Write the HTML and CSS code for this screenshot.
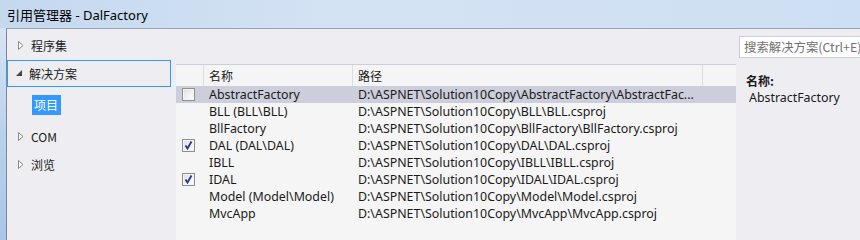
FILE: index.html
```html
<!DOCTYPE html>
<html>
<head>
<meta charset="utf-8">
<link rel="stylesheet" href="styles.css">
</head>
<body>
<div class="window">
  <div class="titlebar">引用管理器 - DalFactory</div>
  <div class="frame">
    <div class="content">
      <div class="nav">
        <div class="nav-item">
          <svg class="tri" width="6" height="9" viewBox="0 0 6 9"><path d="M0.5 0.5 L5 4.5 L0.5 8.5 Z" fill="#fff" stroke="#8a8a8a" stroke-width="1"/></svg>
          <span>程序集</span>
        </div>
        <div class="nav-item selected">
          <svg class="tri-open" width="7" height="7" viewBox="0 0 7 7"><path d="M6 0 L6 6 L0 6 Z" fill="#444"/></svg>
          <span>解决方案</span>
        </div>
        <div class="nav-sub"><span class="sub-sel">项目</span></div>
        <div class="nav-item">
          <svg class="tri" width="6" height="9" viewBox="0 0 6 9"><path d="M0.5 0.5 L5 4.5 L0.5 8.5 Z" fill="#fff" stroke="#8a8a8a" stroke-width="1"/></svg>
          <span>COM</span>
        </div>
        <div class="nav-item">
          <svg class="tri" width="6" height="9" viewBox="0 0 6 9"><path d="M0.5 0.5 L5 4.5 L0.5 8.5 Z" fill="#fff" stroke="#8a8a8a" stroke-width="1"/></svg>
          <span>浏览</span>
        </div>
      </div>
      <div class="list">
        <div class="list-top"></div>
        <div class="table">
          <div class="row header">
            <div class="c-chk"></div>
            <div class="c-name">名称</div>
            <div class="c-path">路径</div>
            <div class="c-extra"></div>
          </div>
          <div class="row sel">
            <div class="c-chk"><span class="chk"></span></div>
            <div class="c-name">AbstractFactory</div>
            <div class="c-path">D:\ASPNET\Solution10Copy\AbstractFactory\AbstractFac...</div>
            <div class="c-extra"></div>
          </div>
          <div class="row">
            <div class="c-chk"></div>
            <div class="c-name">BLL (BLL\BLL)</div>
            <div class="c-path">D:\ASPNET\Solution10Copy\BLL\BLL.csproj</div>
            <div class="c-extra"></div>
          </div>
          <div class="row">
            <div class="c-chk"></div>
            <div class="c-name">BllFactory</div>
            <div class="c-path">D:\ASPNET\Solution10Copy\BllFactory\BllFactory.csproj</div>
            <div class="c-extra"></div>
          </div>
          <div class="row">
            <div class="c-chk"><span class="chk"><svg width="11" height="11" viewBox="0 0 11 11"><path d="M2.5 5.5 L4.5 8.5 L8.5 1.5" fill="none" stroke="#26349a" stroke-width="1.8"/></svg></span></div>
            <div class="c-name">DAL (DAL\DAL)</div>
            <div class="c-path">D:\ASPNET\Solution10Copy\DAL\DAL.csproj</div>
            <div class="c-extra"></div>
          </div>
          <div class="row">
            <div class="c-chk"></div>
            <div class="c-name">IBLL</div>
            <div class="c-path">D:\ASPNET\Solution10Copy\IBLL\IBLL.csproj</div>
            <div class="c-extra"></div>
          </div>
          <div class="row">
            <div class="c-chk"><span class="chk"><svg width="11" height="11" viewBox="0 0 11 11"><path d="M2.5 5.5 L4.5 8.5 L8.5 1.5" fill="none" stroke="#26349a" stroke-width="1.8"/></svg></span></div>
            <div class="c-name">IDAL</div>
            <div class="c-path">D:\ASPNET\Solution10Copy\IDAL\IDAL.csproj</div>
            <div class="c-extra"></div>
          </div>
          <div class="row">
            <div class="c-chk"></div>
            <div class="c-name">Model (Model\Model)</div>
            <div class="c-path">D:\ASPNET\Solution10Copy\Model\Model.csproj</div>
            <div class="c-extra"></div>
          </div>
          <div class="row">
            <div class="c-chk"></div>
            <div class="c-name">MvcApp</div>
            <div class="c-path">D:\ASPNET\Solution10Copy\MvcApp\MvcApp.csproj</div>
            <div class="c-extra"></div>
          </div>
        </div>
      </div>
      <div class="details">
        <div class="search">搜索解决方案(Ctrl+E)</div>
        <div class="d-label">名称:</div>
        <div class="d-value">AbstractFactory</div>
      </div>
    </div>
  </div>
</div>
</body>
</html>
```

FILE: styles.css
```css
* { box-sizing: border-box; }
html, body { margin: 0; padding: 0; }
body {
  width: 860px;
  height: 240px;
  overflow: hidden;
  font-family: "Noto Sans", "Noto Sans CJK SC", sans-serif;
  font-size: 12.4px;
  color: #1a1a1a;
  background: #eeeef2;
}
.window {
  width: 860px;
  height: 240px;
  display: flex;
  flex-direction: column;
  background: linear-gradient(90deg, #c4d8ee 0%, #d4e3f4 40%, #cddff2 100%);
}
.titlebar {
  height: 28px;
  padding-left: 7px;
  line-height: 30px;
  font-size: 13px;
  color: #000;
  font-family: "Noto Sans", "Noto Sans CJK SC", sans-serif;
  flex: none;
}
.frame {
  flex: 1;
  display: flex;
  padding-left: 6px;
  background: linear-gradient(180deg, #d6e5f5 0%, #b9d2ec 50%, #a9c6e6 100%);
  min-height: 0;
}
.content {
  flex: 1;
  display: flex;
  border-left: 1px solid #7d8896;
  border-top: 1px solid #97a3b3;
  background: #eeeef2;
  min-width: 0;
}
.nav {
  width: 169px;
  flex: none;
  padding-top: 2px;
  padding-right: 5px;
  display: flex;
  flex-direction: column;
  font-size: 12px;
}
.nav-item {
  height: 28px;
  display: flex;
  align-items: center;
  padding-left: 10px;
  gap: 7px;
  font-family: "Noto Sans CJK SC", "Noto Sans", sans-serif;
  border: 1px solid transparent;
}
.nav-item.selected {
  margin-top: 1px;
  height: 27px;
  border-color: #3399ff;
  padding-left: 8px;
}
.nav-item.selected span { margin-left: -1px; }
.nav-sub {
  height: 20px;
  margin-top: 8px;
  margin-bottom: 7px;
  padding-left: 25px;
  display: flex;
}
.sub-sel {
  background: #3399ff;
  color: #fff;
  padding: 0 3px 0 2px;
  line-height: 20px;
  font-family: "Noto Sans CJK SC", sans-serif;
}
.list {
  width: 560px;
  flex: none;
  display: flex;
  flex-direction: column;
}
.list-top { height: 35px; flex: none; }
.table {
  flex: 1;
  background: #f5f5f5;
  border-top: 1px solid #ccceDB;
}
.row {
  display: flex;
  height: 17px;
  line-height: 17px;
  white-space: nowrap;
}
.row.header {
  height: 21px;
  line-height: 21px;
  font-size: 12px;
  font-family: "Noto Sans CJK SC", sans-serif;
}
.row.header > div { border-right: 1px solid #dcdde4; }
.row.header .c-extra { border-right: none; }
.row.sel { background: #cccedb; }
.c-chk { width: 28px; flex: none; display: flex; align-items: center; padding-left: 6px; }
.c-name { width: 149px; flex: none; padding-left: 5px; overflow: hidden; }
.c-path { width: 350px; flex: none; padding-left: 5px; overflow: hidden; }
.c-extra { width: 33px; flex: none; }
.chk {
  width: 13px;
  height: 13px;
  border: 1px solid #8e8f8f;
  background: linear-gradient(135deg, #dcdcdc 0%, #f4f4f4 60%, #ffffff 100%);
  box-shadow: inset 0 0 0 1px #f4f4f4;
  display: flex;
  align-items: center;
  justify-content: center;
}
.details {
  flex: 1;
  padding-top: 7px;
  padding-left: 3px;
  min-width: 0;
}
.search {
  height: 22px;
  background: #fff;
  border: 1px solid #cccedb;
  border-right: none;
  padding-left: 4px;
  line-height: 20px;
  color: #717171;
  white-space: nowrap;
  overflow: hidden;
  font-family: "Noto Sans CJK SC", "Noto Sans", sans-serif;
}
.d-label {
  margin-top: 14px;
  padding-left: 7px;
  font-weight: bold;
  font-size: 12px;
  font-family: "Noto Sans CJK SC", sans-serif;
  line-height: 17px;
}
.d-value {
  padding-left: 10px;
  line-height: 17px;
}
```
